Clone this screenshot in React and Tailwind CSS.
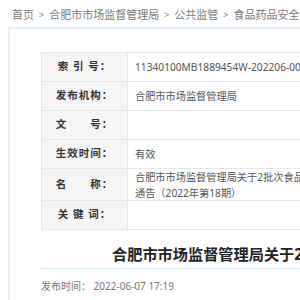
export default function App() {
  const font = { fontFamily: '"Noto Sans", "Noto Sans CJK SC", sans-serif' };
  const rows = [
    { label: "索 引 号：", value: "11340100MB1889454W-202206-00010" },
    { label: "发布机构：", value: "合肥市市场监督管理局" },
    { label: "文　　号：", value: "" },
    { label: "生效时间：", value: "有效" },
    {
      label: "名　　称：",
      value: "合肥市市场监督管理局关于2批次食品",
      value2: "通告（2022年第18期）",
    },
    { label: "关 键 词：", value: "" },
  ];
  return (
    <div className="w-[300px] h-[300px] overflow-hidden bg-white" style={font}>
      <div className="w-[1000px]">
        <div className="h-[27px] pl-[12px] pt-[7px] text-[11px] leading-[16px] text-[#7a7a7a] whitespace-nowrap flex">
          <span>首页</span>
          <span className="text-[9px] px-[5px]">&gt;</span>
          <span>合肥市市场监督管理局</span>
          <span className="text-[9px] px-[5px]">&gt;</span>
          <span>公共监管</span>
          <span className="text-[9px] px-[5px]">&gt;</span>
          <span>食品药品安全</span>
        </div>
        <div className="ml-[8px] border-t-2 border-l-2 border-[#e3effc] pl-[31px] pt-[23px] h-[400px]">
          <div className="w-[700px] border-t border-l border-[#e6e6e6]">
            {rows.map((r, i) => (
              <div key={i} className="flex border-b border-[#e6e6e6]">
                <div className="w-[86px] shrink-0 bg-[#f5f5f5] border-r border-[#e6e6e6] flex items-center justify-center font-bold text-[10.5px] tracking-[1px] text-[#333] whitespace-pre">
                  {r.label}
                </div>
                <div
                  className={
                    "flex-1 pl-[7px] text-[10.2px] text-[#555] flex flex-col justify-center " +
                    (r.value2 ? "h-[31px] leading-[16px]" : "h-[28px] leading-[16px]")
                  }
                >
                  <div>{r.value}</div>
                  {r.value2 && <div>{r.value2}</div>}
                </div>
              </div>
            ))}
          </div>
          <div className="pl-[71px] pt-[14px] h-[39px] text-[15.2px] leading-[20px] font-bold text-[#222] whitespace-nowrap border-b border-[#d9eafb]">
            合肥市市场监督管理局关于2批次食品不合格情况的通告（2022年第18期）
          </div>
          <div className="pt-[9px] text-[10px] leading-[16px] text-[#777] whitespace-nowrap">
            发布时间： 2022-06-07 17:19
          </div>
        </div>
      </div>
    </div>
  );
}
